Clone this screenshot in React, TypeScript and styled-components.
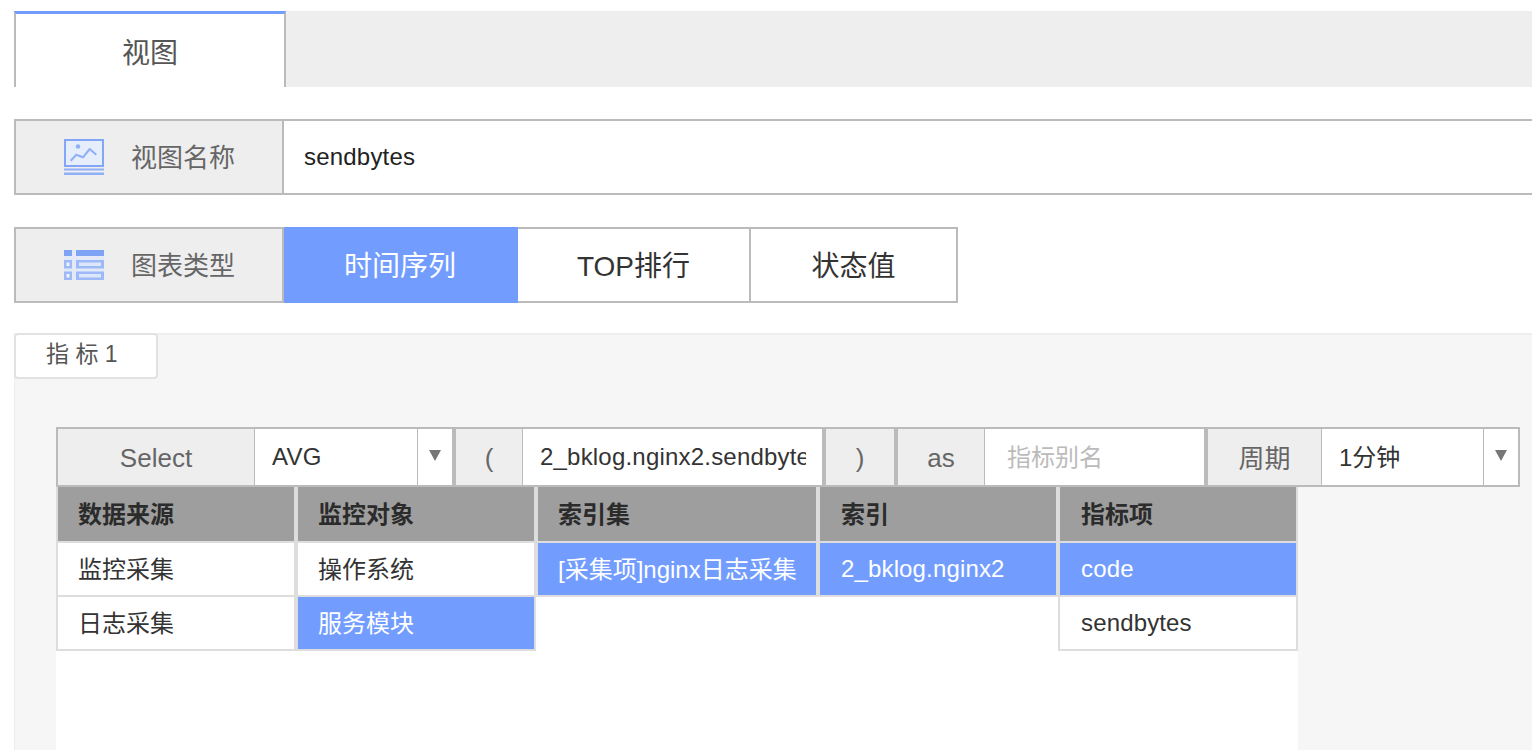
import styled, { createGlobalStyle } from 'styled-components';

const GlobalStyle = createGlobalStyle`
  html, body {
    margin: 0;
    padding: 0;
    height: 750px;
    overflow: hidden;
    background: #fff;
    font-family: "Liberation Sans", "Noto Sans CJK SC", sans-serif;
  }
  * { box-sizing: border-box; }
`;

const Page = styled.div`
  display: flex;
  flex-direction: column;
  width: 1532px;
  height: 750px;
  padding: 11px 0 0 14px;
  overflow: hidden;
`;

const TabBar = styled.div`
  display: flex;
  flex: none;
  height: 76px;
  background: #eee;
`;

const Tab = styled.div`
  display: flex;
  align-items: center;
  justify-content: center;
  width: 272px;
  padding-top: 1px;
  background: #fff;
  border-top: 3px solid #729dff;
  border-left: 2px solid #bbb;
  border-right: 2px solid #bbb;
  color: #555;
  font-size: 28px;
`;

const FormRow = styled.div<{ $width?: number }>`
  display: flex;
  flex: none;
  height: 76px;
  margin-top: 32px;
  width: ${(p) => (p.$width ? `${p.$width}px` : '1530px')};
  border: 2px solid #bbb;
  background: #fff;
`;

const RowLabel = styled.div`
  display: flex;
  align-items: center;
  flex: none;
  width: 268px;
  padding-left: 48px;
  gap: 27px;
  background: #eee;
  border-right: 2px solid #bbb;
  color: #666;
  font-size: 26px;
`;

const LabelText = styled.span`
  padding-bottom: 4px;
`;

const NameValue = styled.div`
  display: flex;
  align-items: center;
  padding-left: 20px;
  color: #222;
  font-size: 24px;
  letter-spacing: 0.2px;
`;

const TypeOption = styled.div<{ $active?: boolean; $width: number }>`
  display: flex;
  align-items: center;
  justify-content: center;
  flex: none;
  width: ${(p) => p.$width}px;
  margin: ${(p) => (p.$active ? '-2px 0' : '0')};
  padding: 0 ${(p) => (p.$active ? 2 : 0)}px 2px 0;
  background: ${(p) => (p.$active ? '#729dff' : '#fff')};
  border-right: ${(p) => (p.$active ? 'none' : '2px solid #bbb')};
  color: ${(p) => (p.$active ? '#fff' : '#333')};
  font-size: 28px;
  &:last-child { border-right: none; }
`;

const Panel = styled.div`
  display: flex;
  flex-direction: column;
  flex: 1;
  min-height: 0;
  margin-top: 30px;
  padding-left: 41px;
  background: #f6f6f6;
  border-top: 2px solid #eee;
  border-left: 1px solid #eee;
`;

const PanelTab = styled.div`
  display: flex;
  align-items: center;
  flex: none;
  width: 144px;
  height: 46px;
  margin: -2px 0 48px -42px;
  padding: 0 0 8px 30px;
  background: #fff;
  border: 2px solid #e2e2e2;
  border-radius: 4px;
  color: #555;
  font-size: 23px;
  white-space: pre;
`;

const QueryRow = styled.div`
  display: flex;
  flex: none;
  width: 1464px;
  height: 60px;
  background: #bbb;
  border: 2px solid #bbb;
`;

const QueryLabel = styled.div<{ $width: number; $mr?: number; $cjk?: boolean }>`
  display: flex;
  align-items: center;
  justify-content: center;
  flex: none;
  width: ${(p) => p.$width}px;
  margin-right: ${(p) => p.$mr ?? 1}px;
  padding-bottom: ${(p) => (p.$cjk ? 2 : 0)}px;
  padding-top: ${(p) => (p.$cjk ? 0 : 2)}px;
  background: #eee;
  color: #666;
  font-size: 26px;
`;

const QueryValue = styled.div<{ $width: number; $mr?: number; $muted?: boolean; $cjk?: boolean }>`
  display: flex;
  align-items: center;
  flex: none;
  width: ${(p) => p.$width}px;
  margin-right: ${(p) => p.$mr ?? 1}px;
  padding: 0 16px ${(p) => (p.$cjk ? 3 : 1)}px ${(p) => (p.$muted ? 22 : 17)}px;
  background: #fff;
  color: ${(p) => (p.$muted ? '#bbb' : '#333')};
  font-size: 24px;
  letter-spacing: ${(p) => (p.$cjk ? 0 : 0.2)}px;
  white-space: nowrap;
`;

const ClippedText = styled.span`
  display: block;
  overflow: hidden;
  min-width: 0;
`;

const Caret = styled.div<{ $mr?: number }>`
  display: flex;
  justify-content: center;
  flex: none;
  width: 34px;
  margin-right: ${(p) => p.$mr ?? 0}px;
  padding-top: 21px;
  background: #fff;
  &::after {
    content: '';
    width: 0;
    height: 0;
    border-left: 6px solid transparent;
    border-right: 6px solid transparent;
    border-top: 11px solid #777;
  }
`;

const ListArea = styled.div`
  display: flex;
  flex: 1;
  align-items: flex-start;
  width: 1242px;
  background: #fff;
`;

const ListColumn = styled.div<{ $width: number }>`
  flex: none;
  width: ${(p) => p.$width}px;
  border-left: 2px solid #ddd;
  border-right: 2px solid #ddd;
  border-bottom: 2px solid #ddd;
`;

const ListHeader = styled.div<{ $inset: number }>`
  display: flex;
  align-items: center;
  height: 56px;
  padding: 0 0 4px ${(p) => p.$inset}px;
  background: #9e9e9e;
  border-bottom: 2px solid #ddd;
  color: #2b2b2b;
  font-size: 24px;
  font-weight: 700;
  white-space: nowrap;
`;

const ListItem = styled.div<{ $selected?: boolean; $inset: number; $cjk?: boolean }>`
  display: flex;
  align-items: center;
  height: 54px;
  padding: 0 0 ${(p) => (p.$cjk ? 4 : 0)}px ${(p) => p.$inset}px;
  background: ${(p) => (p.$selected ? '#729dff' : '#fff')};
  border-bottom: 2px solid #ddd;
  color: ${(p) => (p.$selected ? '#fff' : '#333')};
  font-size: 24px;
  letter-spacing: ${(p) => (p.$cjk ? 0 : 0.15)}px;
  white-space: nowrap;
  &:last-child { height: 52px; border-bottom: none; }
`;

function ChartIcon() {
  return (
    <svg width="40" height="36" viewBox="0 0 40 36" fill="none">
      <rect x="1" y="1" width="38" height="26" fill="#e6edfb" stroke="#83a7f6" strokeWidth="2" />
      <circle cx="14" cy="7.5" r="2.2" fill="#8fb0f7" />
      <path d="M6.7 21.7 L12.3 15.7 L19 18.3 L25.7 10 L32.3 15.7" stroke="#8fb0f7" strokeWidth="2" strokeLinejoin="round" />
      <rect y="29.5" width="40" height="2" fill="#8fb0f7" />
      <rect y="33.5" width="40" height="2.5" fill="#8fb0f7" />
    </svg>
  );
}

function ListIcon() {
  return (
    <svg width="40" height="30" viewBox="0 0 40 30">
      <rect width="40" height="30" fill="#e3e9f6" />
      <rect width="8" height="6" fill="#7ea3f5" />
      <rect x="12" width="28" height="6" fill="#7ea3f5" />
      <rect y="10" width="8" height="8.5" fill="#9db9f7" />
      <rect x="2.5" y="12.5" width="3" height="3.5" fill="#f4f6fc" />
      <rect x="12" y="10" width="28" height="8.5" fill="#9db9f7" />
      <rect x="15" y="12.5" width="22" height="3.5" fill="#dde6fa" />
      <rect y="21.5" width="8" height="8.5" fill="#9db9f7" />
      <rect x="2.5" y="24" width="3" height="3.5" fill="#f4f6fc" />
      <rect x="12" y="21.5" width="28" height="8.5" fill="#9db9f7" />
      <rect x="15" y="24" width="22" height="3.5" fill="#dde6fa" />
    </svg>
  );
}

type Entry = { text: string; selected?: boolean; cjk?: boolean };
type Column = { title: string; width: number; inset: number; items: Entry[] };

const columns: Column[] = [
  { title: '数据来源', width: 240, inset: 20, items: [{ text: '监控采集', cjk: true }, { text: '日志采集', cjk: true }] },
  { title: '监控对象', width: 240, inset: 20, items: [{ text: '操作系统', cjk: true }, { text: '服务模块', selected: true, cjk: true }] },
  { title: '索引集', width: 282, inset: 20, items: [{ text: '[采集项]nginx日志采集', selected: true, cjk: true }] },
  { title: '索引', width: 240, inset: 21, items: [{ text: '2_bklog.nginx2', selected: true }] },
  { title: '指标项', width: 240, inset: 21, items: [{ text: 'code', selected: true }, { text: 'sendbytes' }] },
];

export default function App() {
  return (
    <Page>
      <GlobalStyle />
      <TabBar>
        <Tab>视图</Tab>
      </TabBar>

      <FormRow>
        <RowLabel>
          <ChartIcon />
          <LabelText>视图名称</LabelText>
        </RowLabel>
        <NameValue>sendbytes</NameValue>
      </FormRow>

      <FormRow $width={944}>
        <RowLabel>
          <ListIcon />
          <LabelText>图表类型</LabelText>
        </RowLabel>
        <TypeOption $active $width={234}>时间序列</TypeOption>
        <TypeOption $width={233}>TOP排行</TypeOption>
        <TypeOption $width={205}>状态值</TypeOption>
      </FormRow>

      <Panel>
        <PanelTab>指 标 1</PanelTab>
        <QueryRow>
          <QueryLabel $width={196}>Select</QueryLabel>
          <QueryValue $width={162}>AVG</QueryValue>
          <Caret $mr={4} />
          <QueryLabel $width={66}>(</QueryLabel>
          <QueryValue $width={299} $mr={4}>
            <ClippedText>2_bklog.nginx2.sendbytes</ClippedText>
          </QueryValue>
          <QueryLabel $width={68} $mr={4}>)</QueryLabel>
          <QueryLabel $width={86}>as</QueryLabel>
          <QueryValue $width={219} $mr={4} $muted $cjk>指标别名</QueryValue>
          <QueryLabel $width={113} $cjk>周期</QueryLabel>
          <QueryValue $width={161} $cjk>1分钟</QueryValue>
          <Caret />
        </QueryRow>
        <ListArea>
          {columns.map((col) => (
            <ListColumn key={col.title} $width={col.width}>
              <ListHeader $inset={col.inset}>{col.title}</ListHeader>
              {col.items.map((item) => (
                <ListItem key={item.text} $selected={item.selected} $inset={col.inset} $cjk={item.cjk}>
                  {item.text}
                </ListItem>
              ))}
            </ListColumn>
          ))}
        </ListArea>
      </Panel>
    </Page>
  );
}
